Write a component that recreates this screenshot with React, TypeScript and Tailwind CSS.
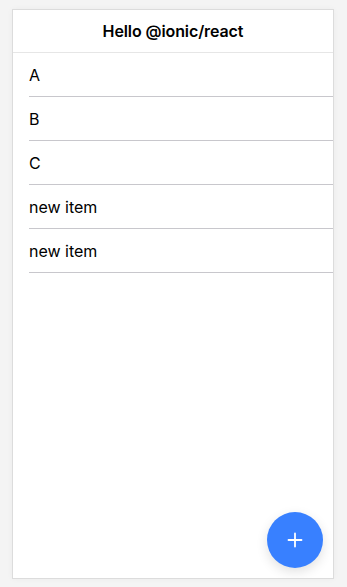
import React, { useState } from 'react';

const App: React.FC = () => {
    const [items, setItems] = useState<string[]>(['A', 'B', 'C', 'new item', 'new item']);

    const addItem = () => setItems((prev) => [...prev, 'new item']);

    return (
        <div className="w-[347px] h-[587px] bg-[#f4f4f4] pt-[9px] pl-[12px]" style={{ fontFamily: 'Inter, "Noto Sans", sans-serif' }}>
            <div className="relative w-[322px] h-[570px] bg-white border border-[#dcdcdc] shadow-[0_0_6px_rgba(0,0,0,0.04)] flex flex-col overflow-hidden">
                {/* Toolbar */}
                <div className="h-[43px] shrink-0 flex items-center justify-center border-b border-[#e6e6e6]">
                    <h1 className="text-[16px] font-semibold text-black tracking-[-0.1px]">Hello @ionic/react</h1>
                </div>

                {/* List */}
                <ul className="flex flex-col">
                    {items.map((item, i) => (
                        <li key={i} className="pl-4">
                            <div className="h-[44px] flex items-center border-b border-[#c8c7cc] text-[16px] text-black">
                                {item}
                            </div>
                        </li>
                    ))}
                </ul>

                {/* FAB */}
                <button
                    onClick={addItem}
                    className="absolute right-[10px] bottom-[10px] w-[56px] h-[56px] rounded-full bg-[#3880ff] flex items-center justify-center shadow-[0_4px_12px_rgba(0,0,0,0.12)]"
                    title="Add item"
                >
                    <svg width="18" height="18" viewBox="0 0 18 18" fill="none" stroke="white" strokeWidth="1.8" strokeLinecap="round">
                        <path d="M9 2.5v13M2.5 9h13" />
                    </svg>
                </button>
            </div>
        </div>
    );
};

export default App;
